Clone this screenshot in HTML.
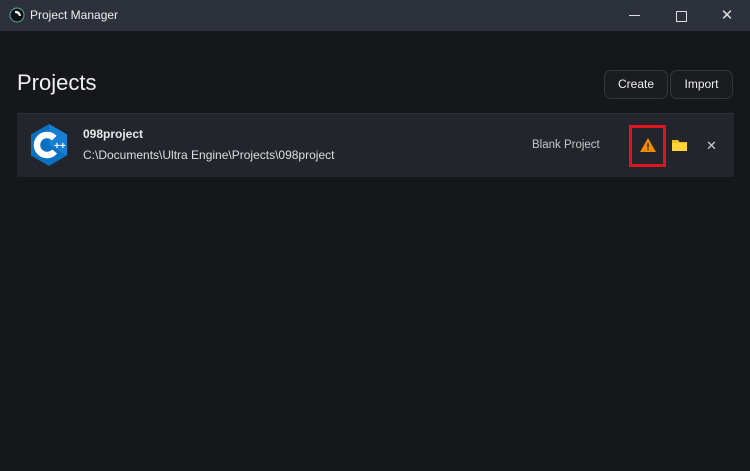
<!DOCTYPE html>
<html><head><style>
body{margin:0;width:750px;height:471px;background:#16171b;font-family:"Liberation Sans",sans-serif;position:relative;overflow:hidden;color:#e8e8e8}
.tb{position:absolute;left:0;top:0;width:750px;height:31px;background:#2c313b}
.t{position:absolute;left:30px;top:8px;font-size:12px;color:#eee}
.ab{position:absolute;top:0;height:31px;width:46px;color:#ddd;text-align:center;line-height:31px;font-size:13px}
h1{position:absolute;left:17px;top:70px;margin:0;font-weight:normal;font-size:22px;color:#f0f0f0}
.btn{position:absolute;top:70px;height:27px;border:1px solid #34363b;border-radius:7px;background:#1b1c20;font-size:12px;line-height:27px;text-align:center;color:#eee}
.card{position:absolute;left:17px;top:113px;width:717px;height:63px;background:#22252b;border-top:1px solid #2e3138}
.n{position:absolute;left:83px;top:127px;font-weight:bold;font-size:12px}
.p{position:absolute;left:83px;top:148px;font-size:12px;color:#ddd}
.bp{position:absolute;left:532px;top:139px;font-size:11.5px;color:#c8c8c8}
.red{position:absolute;left:629px;top:125px;width:31px;height:36px;border:3px solid #e0141e}
</style></head><body>
<div class="tb"><svg style="position:absolute;left:9px;top:7px" width="16" height="16"><circle cx="8" cy="8" r="7" fill="#111" stroke="#5aa" stroke-width="1"/><path d="M6 4 Q11 3 12 9 L10 9 Q9 6 6 6Z" fill="#eee"/></svg>
<div class="t">Project Manager</div>
<div style="position:absolute;left:629px;top:15px;width:11px;height:1px;background:#ddd"></div>
<div class="ab" style="left:658px"><div style="width:9px;height:9px;border:1px solid #ddd;margin:11px auto"></div></div>
<div class="ab" style="left:704px;font-size:15px;font-weight:300">&#x2715;</div></div>
<h1>Projects</h1>
<div class="btn" style="left:604px;width:62px">Create</div>
<div class="btn" style="left:670px;width:61px">Import</div>
<div class="card"></div>
<svg style="position:absolute;left:29px;top:123px" width="40" height="44" viewBox="0 0 40 44"><polygon points="20,1 38,11.5 38,32.5 20,43 2,32.5 2,11.5" fill="#0a70c2"/><polygon points="20,1 38,11.5 38,32.5 20,22" fill="#1680d4"/><circle cx="18" cy="22" r="10" fill="none" stroke="#fff" stroke-width="6.5" stroke-dasharray="48 20" transform="rotate(40 18 22)"/><text x="25" y="26" font-size="10" font-weight="bold" fill="#fff" font-family="Liberation Sans">++</text></svg>
<div class="n">098project</div>
<div class="p">C:\Documents\Ultra Engine\Projects\098project</div>
<div class="bp">Blank Project</div>
<div class="red"></div>
<svg style="position:absolute;left:639px;top:137px" width="18" height="16"><polygon points="9,1 17,15 1,15" fill="#f08a00"/><rect x="8.2" y="6" width="1.6" height="4.5" fill="#333"/><rect x="8.2" y="11.5" width="1.6" height="1.6" fill="#333"/></svg>
<svg style="position:absolute;left:671px;top:139px" width="17" height="13"><path d="M1 1h6l1.5 2H16v9H1z" fill="#f2c01e"/><rect x="1" y="4" width="15" height="8" fill="#ffd43a"/></svg>
<div style="position:absolute;left:706px;top:138px;font-size:13px;color:#ccc">&#x2715;</div>
</body></html>
